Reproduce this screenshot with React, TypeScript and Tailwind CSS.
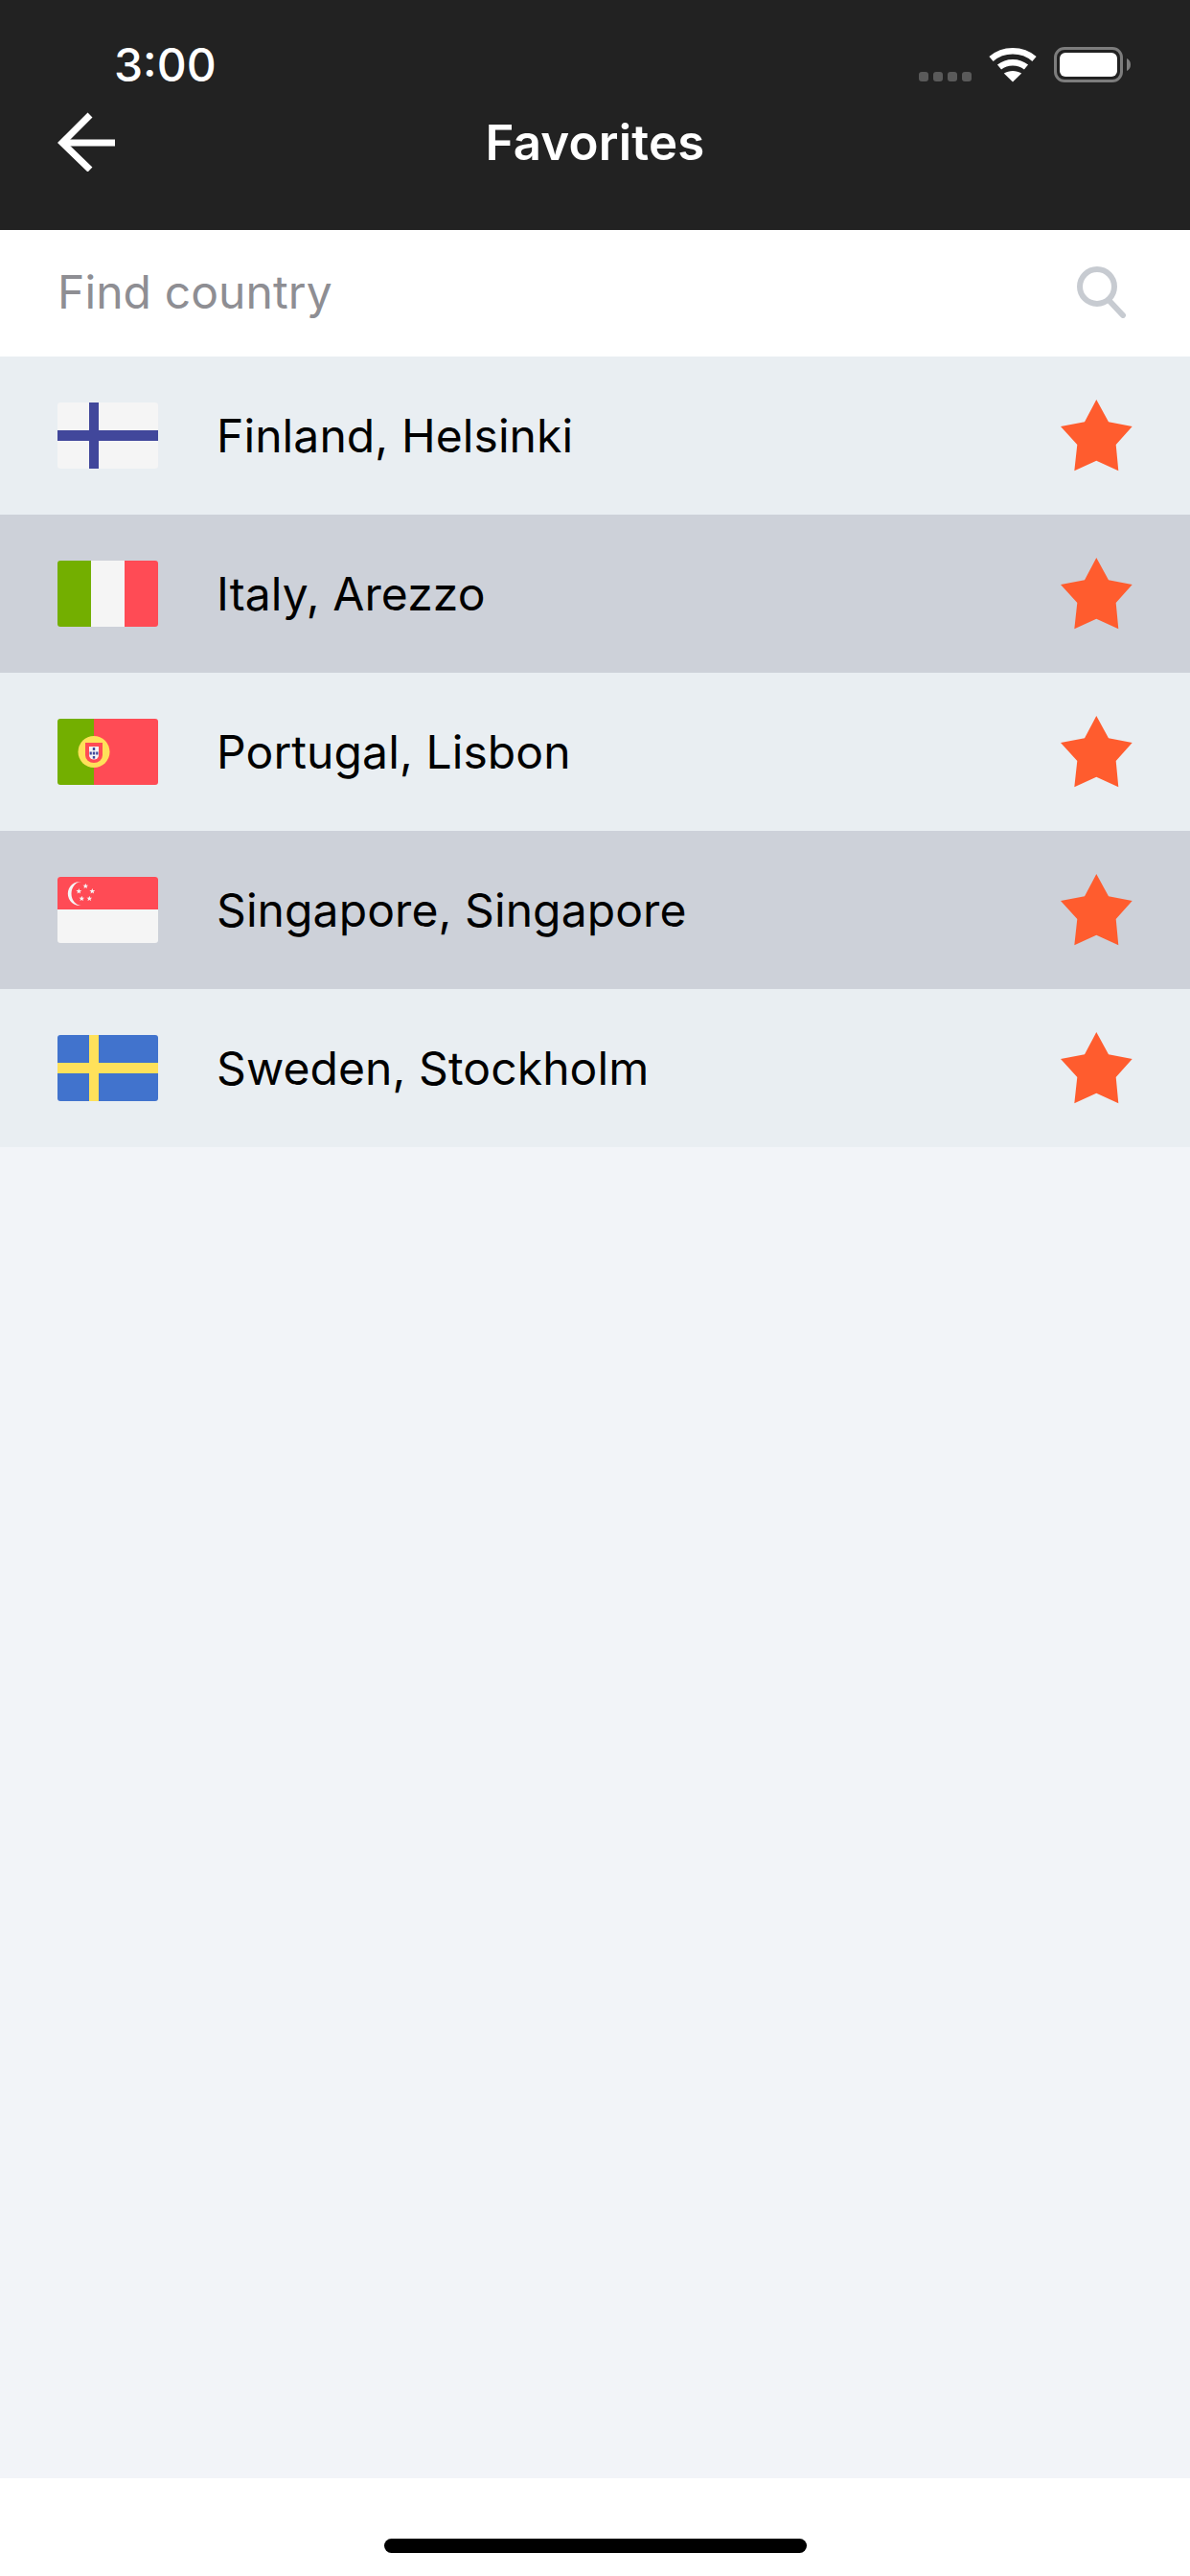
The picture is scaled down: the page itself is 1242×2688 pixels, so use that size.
import React from 'react';

const countries = [
  { name: 'Finland, Helsinki', flag: 'fi' },
  { name: 'Italy, Arezzo', flag: 'it' },
  { name: 'Portugal, Lisbon', flag: 'pt' },
  { name: 'Singapore, Singapore', flag: 'sg' },
  { name: 'Sweden, Stockholm', flag: 'se' },
];

const smallStar = '0,-3 0.8,-0.9 2.9,-0.9 1.2,0.4 1.8,2.4 0,1.2 -1.8,2.4 -1.2,0.4 -2.9,-0.9 -0.8,-0.9';

function Flag({ code }: { code: string }) {
  return (
    <svg width="105" height="69" viewBox="0 0 105 69" className="block shrink-0 rounded-[3px]">
      {code === 'fi' && (
        <>
          <rect width="105" height="69" fill="#f5f5f5" />
          <rect x="33" width="10" height="69" fill="#41479b" />
          <rect y="29" width="105" height="11" fill="#41479b" />
        </>
      )}
      {code === 'it' && (
        <>
          <rect width="35" height="69" fill="#73af00" />
          <rect x="35" width="35" height="69" fill="#f5f5f5" />
          <rect x="70" width="35" height="69" fill="#ff4b55" />
        </>
      )}
      {code === 'pt' && (
        <>
          <rect width="38" height="69" fill="#73af00" />
          <rect x="38" width="67" height="69" fill="#ff4b55" />
          <circle cx="38" cy="34.5" r="16.5" fill="#ffe15a" />
          <path d="M29 25h18v13a9 8 0 0 1-18 0z" fill="#ff4b55" />
          <path d="M33 29h10v9a5 4.500 0 0 1-10 0z" fill="#f5f5f5" />
          <g fill="#41479b">
            <rect x="36.8" y="30" width="2.4" height="3" />
            <rect x="36.8" y="34.5" width="2.4" height="3" />
            <rect x="33.6" y="34.5" width="2.2" height="3" />
            <rect x="40.2" y="34.5" width="2.2" height="3" />
            <rect x="36.8" y="39" width="2.4" height="2.6" />
          </g>
        </>
      )}
      {code === 'sg' && (
        <>
          <rect width="105" height="69" fill="#f5f5f5" />
          <rect width="105" height="34" fill="#ff4b55" />
          <path d="M25 5a12.600 12.600 0 1 0 0 25a10.500 12.500 0 0 1 0-25z" fill="#f5f5f5" />
          <g fill="#f5f5f5">
            <polygon points={smallStar} transform="translate(29.3 9.7)" />
            <polygon points={smallStar} transform="translate(22.3 15)" />
            <polygon points={smallStar} transform="translate(36.3 15)" />
            <polygon points={smallStar} transform="translate(25.3 22.7)" />
            <polygon points={smallStar} transform="translate(33.3 22.7)" />
          </g>
        </>
      )}
      {code === 'se' && (
        <>
          <rect width="105" height="69" fill="#4173cd" />
          <rect x="33" width="10" height="69" fill="#ffe15a" />
          <rect y="29" width="105" height="11" fill="#ffe15a" />
        </>
      )}
    </svg>
  );
}

function Star() {
  return (
    <svg width="75" height="75" viewBox="0 0 75 75" className="block shrink-0">
      <polygon
        points="37.3,0 50,23.3 74.7,28 57.7,47 60.3,74.3 37.3,63.7 14.3,74.3 17.3,47 0,28 25,23.3"
        fill="#ff5c2e"
      />
    </svg>
  );
}

export default function App() {
  return (
    <div className="flex h-[2688px] w-[1242px] flex-col bg-[#f2f4f8] font-['Inter',sans-serif]">
      {/* Top bar */}
      <header className="h-[240px] shrink-0 bg-[#222222] text-white">
        <div className="flex h-[100px] items-start justify-between pl-[119px] pr-[70px]">
          <span className="mt-[38px] text-[48px] font-medium leading-[60px]">3:00</span>
          <div className="mt-[49px] flex items-start">
            <div className="mt-[26px] flex gap-[5px]">
              <span className="h-[10px] w-[10px] rounded-[3px] bg-[#5a5a5a]" />
              <span className="h-[10px] w-[10px] rounded-[3px] bg-[#5a5a5a]" />
              <span className="h-[10px] w-[10px] rounded-[3px] bg-[#5a5a5a]" />
              <span className="h-[10px] w-[10px] rounded-[3px] bg-[#5a5a5a]" />
            </div>
            <svg width="50" height="37" viewBox="0 0 50 37" className="ml-[18px] block" fill="none" stroke="#ffffff" strokeWidth="6.5">
              <path d="M2.5 12.5C15 1.5 35 1.5 47.5 12.5" />
              <path d="M11 21c8-6.5 20-6.5 28 0" />
              <path d="M25 36.5L15.8 27.6c5.400-3.600 13-3.600 18.400 0z" fill="#ffffff" stroke="none" />
            </svg>
            <div className="relative ml-[18px] flex h-[37px] w-[72px] items-center justify-center rounded-[11px] border-[3px] border-[#7d7d7d]">
              <span className="h-[25px] w-[60px] rounded-[6px] bg-white" />
              <svg width="4" height="13" viewBox="0 0 4 13" className="absolute left-[73px] top-[9px]">
                <path d="M0 0c2.500 1 4 3.500 4 6.500S2.500 12 0 13z" fill="#7d7d7d" />
              </svg>
            </div>
          </div>
        </div>
        <div className="relative flex h-[100px] items-center justify-center pb-[2px]">
          <button className="absolute left-[60px] top-[17px] block">
            <svg width="61" height="62" viewBox="0 0 61 62" className="block" fill="none" stroke="#ffffff" strokeWidth="7">
              <path d="M60 32H5" />
              <path d="M34 3L5 32l29 28" />
            </svg>
          </button>
          <h1 className="text-[51px] font-semibold leading-[60px] tracking-[0.2px]">Favorites</h1>
        </div>
      </header>

      {/* Search */}
      <div className="flex h-[132px] shrink-0 items-center justify-between bg-white pb-[2px] pl-[60px] pr-[66px]">
        <span className="text-[48px] leading-[60px] tracking-[0.1px] text-[#8e8e93]">Find country</span>
        <svg width="52" height="54" viewBox="0 0 52 54" className="block" fill="none" stroke="#c7cbd1" strokeWidth="6">
          <circle cx="21" cy="21" r="18" />
          <path d="M33 35l15 16" strokeLinecap="round" />
        </svg>
      </div>

      {/* Favorite countries */}
      <ul className="shrink-0">
        {countries.map((c, i) => (
          <li
            key={c.flag}
            className={`flex h-[165px] items-center px-[60px] ${i % 2 === 0 ? 'bg-[#e9eef2]' : 'bg-[#cdd1d9]'}`}
          >
            <Flag code={c.flag} />
            <span className="ml-[61px] flex-1 text-[48px] leading-[60px] tracking-[0.1px] text-black">{c.name}</span>
            <Star />
          </li>
        ))}
      </ul>

      <div className="flex-1" />

      {/* Home indicator */}
      <div className="flex h-[102px] shrink-0 justify-center bg-white pt-[63px]">
        <span className="h-[15px] w-[441px] rounded-full bg-black" />
      </div>
    </div>
  );
}
